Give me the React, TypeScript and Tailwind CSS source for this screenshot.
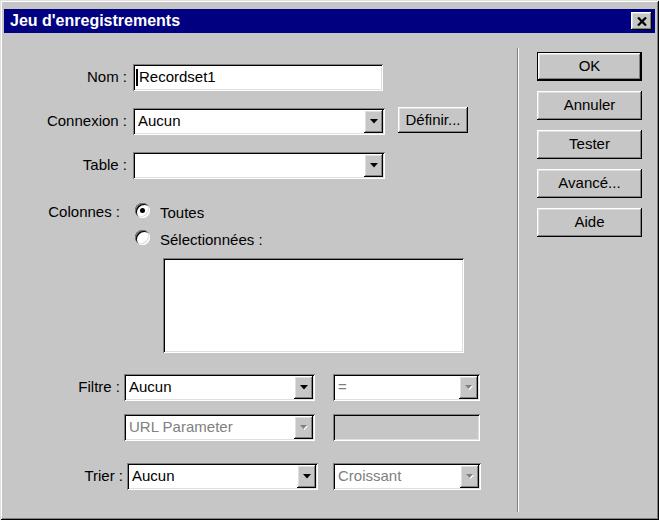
import React from "react";

const SUNKEN =
  "shadow-[inset_1px_1px_0_#808080,inset_-1px_-1px_0_#ffffff,inset_2px_2px_0_#000000,inset_-2px_-2px_0_#dfdfdf]";
const RAISED =
  "shadow-[inset_-1px_-1px_0_#000000,inset_1px_1px_0_#ffffff,inset_-2px_-2px_0_#808080,inset_2px_2px_0_#dfdfdf]";

function Arrow({ disabled }: { disabled?: boolean }) {
  if (disabled) {
    return (
      <svg width="8" height="5" viewBox="0 0 8 5">
        <polygon points="1,1 8,1 4.5,5" fill="#ffffff" />
        <polygon points="0,0 7,0 3.5,4" fill="#808080" />
      </svg>
    );
  }
  return (
    <svg width="8" height="5" viewBox="0 0 8 5">
      <polygon points="0,0 8,0 4,4.5" fill="#000000" />
    </svg>
  );
}

function Select({
  className,
  text,
  disabled,
  arrowDisabled,
}: {
  className: string;
  text?: string;
  disabled?: boolean;
  arrowDisabled?: boolean;
}) {
  return (
    <div className={`flex h-[27px] bg-white p-[2px] ${SUNKEN} ${className}`}>
      <div
        className={`flex flex-1 items-center pl-[3px] text-[15px] ${
          disabled ? "text-[#808080]" : "text-black"
        }`}
      >
        {text}
      </div>
      <div
        className={`flex h-full w-[19px] items-center justify-center bg-[#c6c6c6] ${RAISED}`}
      >
        <Arrow disabled={arrowDisabled ?? disabled} />
      </div>
    </div>
  );
}

function Button({
  children,
  className,
  isDefault,
}: {
  children: React.ReactNode;
  className: string;
  isDefault?: boolean;
}) {
  if (isDefault) {
    return (
      <div className={`border border-black ${className}`}>
        <div
          className={`flex h-full w-full items-center justify-center bg-[#c6c6c6] text-[15px] ${RAISED}`}
        >
          {children}
        </div>
      </div>
    );
  }
  return (
    <div
      className={`flex items-center justify-center bg-[#c6c6c6] text-[15px] ${RAISED} ${className}`}
    >
      {children}
    </div>
  );
}

function Radio({ checked }: { checked?: boolean }) {
  return (
    <div
      className={`flex h-[15px] w-[15px] items-center justify-center rounded-full bg-white shadow-[inset_1px_1px_0_#808080,inset_-1px_-1px_0_#ffffff,inset_2px_2px_0_#000000,inset_-2px_-2px_0_#dfdfdf]`}
    >
      {checked && <div className="h-[5px] w-[5px] rounded-full bg-black" />}
    </div>
  );
}

export default function App() {
  return (
    <div className="flex h-[520px] w-[659px] flex-col bg-[#c6c6c6] px-[4px] pb-[4px] pt-[9px] font-['Liberation_Sans',Arial,sans-serif] text-black shadow-[inset_1px_1px_0_#dfdfdf,inset_-1px_-1px_0_#000000,inset_2px_2px_0_#ffffff,inset_-2px_-2px_0_#808080]">
      {/* Title bar */}
      <div className="flex h-[24px] items-center justify-between bg-[#000080] pl-[6px] pr-[3px]">
        <span className="text-[16px] font-bold leading-none text-white">
          Jeu d'enregistrements
        </span>
        <div
          className={`flex h-[18px] w-[21px] items-center justify-center bg-[#c6c6c6] ${RAISED}`}
        >
          <svg width="10" height="9" viewBox="0 0 10 9">
            <path d="M1 0.5 L9 8.5 M9 0.5 L1 8.5" stroke="#000" strokeWidth="2.2" />
          </svg>
        </div>
      </div>

      {/* Body */}
      <div className="flex flex-1">
        {/* Left form */}
        <div className="flex w-[513px] flex-col text-[15px]">
          {/* Nom */}
          <div className="mt-[31px] flex items-center">
            <div className="w-[123px] text-right">Nom :</div>
            <div className={`ml-[6px] flex h-[27px] w-[250px] items-center bg-white p-[2px] ${SUNKEN}`}>
              <div className="ml-[1px] h-[17px] w-[2px] bg-black" />
              <span className="ml-[1px]">Recordset1</span>
            </div>
          </div>

          {/* Connexion */}
          <div className="mt-[17px] flex items-center">
            <div className="w-[123px] text-right">Connexion :</div>
            <Select className="ml-[6px] w-[252px]" text="Aucun" />
            <Button className="-mt-[1px] ml-[13px] h-[26px] w-[70px] self-start">
              Définir...
            </Button>
          </div>

          {/* Table */}
          <div className="mt-[17px] flex items-center">
            <div className="w-[123px] text-right">Table :</div>
            <Select className="ml-[6px] w-[252px]" text="" />
          </div>

          {/* Colonnes */}
          <div className="mt-[21px] flex h-[20px] items-center">
            <div className="mt-[4px] w-[116px] text-right">Colonnes :</div>
            <div className="ml-[15px]">
              <Radio checked />
            </div>
            <span className="ml-[10px] mt-[7px]">Toutes</span>
          </div>
          <div className="mt-[7px] flex h-[20px] items-center">
            <div className="ml-[131px]">
              <Radio />
            </div>
            <span className="ml-[10px] mt-[6px]">Sélectionnées :</span>
          </div>

          {/* Listbox */}
          <div className={`ml-[159px] mt-[11px] h-[95px] w-[301px] bg-white ${SUNKEN}`} />

          {/* Filtre */}
          <div className="mt-[21px] flex items-center">
            <div className="w-[116px] text-right">Filtre :</div>
            <Select className="ml-[4px] w-[191px]" text="Aucun" />
            <Select className="ml-[18px] w-[147px]" text="=" disabled />
          </div>

          {/* URL Parameter */}
          <div className="mt-[13px] flex items-center">
            <Select className="ml-[120px] w-[191px]" text="URL Parameter" disabled />
            <div className={`ml-[18px] h-[27px] w-[147px] bg-[#c6c6c6] ${SUNKEN}`} />
          </div>

          {/* Trier */}
          <div className="mt-[22px] flex items-center">
            <div className="w-[119px] text-right">Trier :</div>
            <Select className="ml-[4px] w-[191px]" text="Aucun" />
            <Select className="ml-[15px] w-[148px]" text="Croissant" disabled />
          </div>
        </div>

        {/* Separator */}
        <div className="mb-[4px] mt-[15px] flex w-[2px]">
          <div className="w-[1px] bg-[#808080]" />
          <div className="w-[1px] bg-white" />
        </div>

        {/* Right buttons */}
        <div className="ml-[18px] flex flex-col gap-[10px] pt-[19px]">
          <Button className="h-[29px] w-[105px]" isDefault>
            OK
          </Button>
          <Button className="h-[29px] w-[105px]">Annuler</Button>
          <Button className="h-[29px] w-[105px]">Tester</Button>
          <Button className="h-[29px] w-[105px]">Avancé...</Button>
          <Button className="h-[29px] w-[105px]">Aide</Button>
        </div>
      </div>
    </div>
  );
}
